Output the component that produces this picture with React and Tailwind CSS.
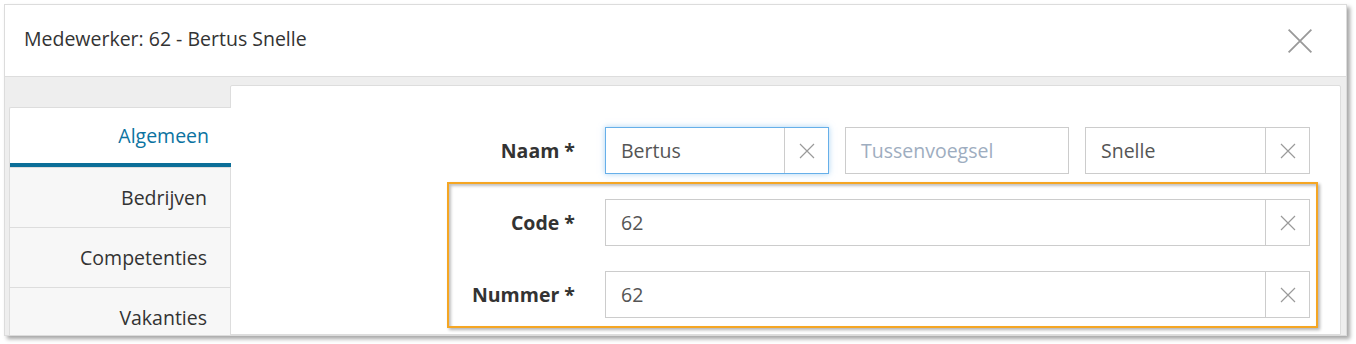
import React from "react";

const XIcon = ({ size = 16, stroke = "#9a9a9a", width = 1.2 }) => (
  <svg width={size} height={size} viewBox="0 0 16 16" fill="none">
    <path d="M1 1L15 15M15 1L1 15" stroke={stroke} strokeWidth={width} />
  </svg>
);

function Input({ value, placeholder, clear, focus, className = "" }) {
  return (
    <div
      className={
        "flex h-[47px] bg-white border " +
        (focus
          ? "border-[#66afe9] shadow-[0_0_6px_rgba(102,175,233,0.55)] "
          : "border-[#cccccc] ") +
        className
      }
    >
      <div className="flex-1 flex items-center pl-[15px] text-[19.5px] min-w-0">
        {value ? (
          <span className="text-[#555555]">{value}</span>
        ) : (
          <span className="text-[#9eadc0]">{placeholder}</span>
        )}
      </div>
      {clear && (
        <div className="w-[44px] flex items-center justify-center border-l border-[#cccccc]">
          <XIcon />
        </div>
      )}
    </div>
  );
}

export default function App() {
  const tabs = ["Bedrijven", "Competenties", "Vakanties"];
  return (
    <div
      className="w-[1356px] h-[344px] bg-white pt-[4px] pl-[4px] overflow-hidden"
      style={{ fontFamily: '"Open Sans", "Liberation Sans", sans-serif' }}
    >
      <div className="w-[1343px] h-[332px] border border-[#dcdcdc] bg-white shadow-[3px_3px_4px_rgba(0,0,0,0.35)] flex flex-col overflow-hidden">
        {/* header */}
        <div className="h-[72px] shrink-0 flex items-center justify-between pl-[19px] pr-[33px] border-b border-[#dddddd]">
          <span className="text-[19.5px] text-[#333333] -mt-[3px]">
            Medewerker: 62 - Bertus Snelle
          </span>
          <XIcon size={26} stroke="#999999" width={1.1} />
        </div>
        {/* body */}
        <div className="flex-1 flex bg-[#eeeeee] pl-[4px] pr-[7px] pt-[8px] min-h-0">
          {/* tabs */}
          <div className="w-[222px] shrink-0 mt-[22px] -mr-px relative z-10 flex flex-col">
            <div className="h-[60px] shrink-0 bg-white border-t border-l border-[#dddddd] flex flex-col rounded-tl-[2px]">
              <div className="flex-1 flex items-center justify-end pr-[22px] text-[19.5px] text-[#0b73a1]">
                Algemeen
              </div>
              <div className="h-[4px] bg-[#0c6e98]" />
            </div>
            {tabs.map((t) => (
              <div
                key={t}
                className="h-[61px] shrink-0 bg-[#f7f7f7] border border-[#dddddd] -mb-px flex items-center justify-end pr-[23px] text-[19.5px] text-[#333333]"
              >
                {t}
              </div>
            ))}
          </div>
          {/* panel */}
          <div className="flex-1 bg-white border border-[#dddddd] rounded-t-[2px] pt-[41px] pr-[30px]">
            <div className="flex items-center">
              <div className="w-[344px] text-right text-[19.5px] font-bold text-[#333333]">
                Naam *
              </div>
              <div className="ml-[30px] flex gap-[16px]">
                <Input value="Bertus" clear focus className="w-[224px]" />
                <Input placeholder="Tussenvoegsel" className="w-[224px]" />
                <Input value="Snelle" clear className="w-[225px]" />
              </div>
            </div>
            <div className="mt-[8px] ml-[216px] mr-[-8px] border-2 border-[#f5a623] shadow-[2px_2px_3px_rgba(0,0,0,0.3),inset_2px_2px_3px_rgba(0,0,0,0.25)] pt-[15px] pb-[8px] pr-[6px] flex flex-col gap-[25px]">
              <div className="flex items-center">
                <div className="w-[126px] text-right text-[19.5px] font-bold text-[#333333]">
                  Code *
                </div>
                <Input value="62" clear className="ml-[30px] flex-1" />
              </div>
              <div className="flex items-center">
                <div className="w-[126px] text-right text-[19.5px] font-bold text-[#333333]">
                  Nummer *
                </div>
                <Input value="62" clear className="ml-[30px] flex-1" />
              </div>
            </div>
          </div>
        </div>
      </div>
    </div>
  );
}
